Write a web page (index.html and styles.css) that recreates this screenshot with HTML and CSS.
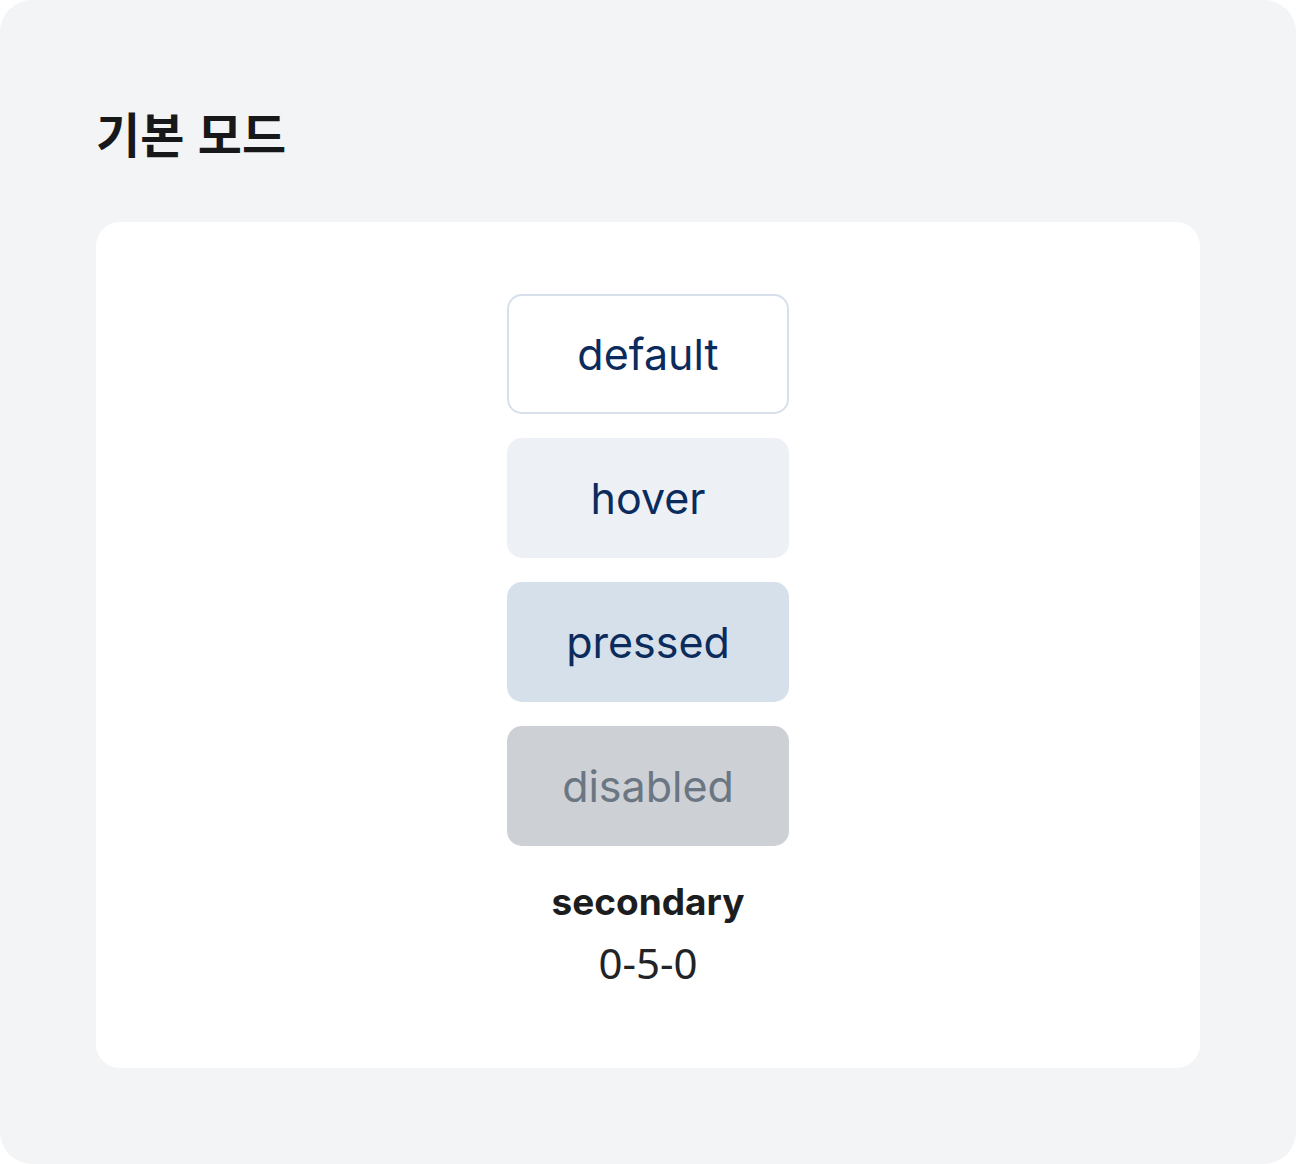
FILE: index.html
```html
<!DOCTYPE html>
<html lang="ko">
<head>
<meta charset="utf-8">
<link rel="stylesheet" href="styles.css">
</head>
<body>
<div class="frame">
  <h1 class="title">기본 모드</h1>
  <div class="card">
    <div class="stack">
      <div class="btn btn-default">default</div>
      <div class="btn btn-hover">hover</div>
      <div class="btn btn-pressed">pressed</div>
      <div class="btn btn-disabled">disabled</div>
    </div>
    <div class="caption">
      <div class="name">secondary</div>
      <div class="code">0-5-0</div>
    </div>
  </div>
</div>
</body>
</html>
```

FILE: styles.css
```css
* { box-sizing: border-box; }
html, body { margin: 0; padding: 0; background: #ffffff; }
body {
  font-family: Inter, "Noto Sans CJK KR", sans-serif;
  width: 1296px;
  height: 1164px;
}
.frame {
  width: 1296px;
  height: 1164px;
  background: #f3f4f6;
  border-radius: 32px;
  padding: 96px 96px 96px 96px;
  display: flex;
  flex-direction: column;
}
.title {
  margin: 0;
  font-family: "Noto Sans CJK KR", Inter, sans-serif;
  font-weight: 700;
  font-size: 48px;
  line-height: 72px;
  color: #17181a;
  height: 72px;
}
.card {
  margin-top: 54px;
  background: #ffffff;
  border-radius: 24px;
  height: 846px;
  padding-top: 72px;
  display: flex;
  flex-direction: column;
  align-items: center;
}
.stack {
  display: flex;
  flex-direction: column;
  gap: 24px;
}
.btn {
  width: 282px;
  height: 120px;
  border-radius: 15px;
  display: flex;
  align-items: center;
  justify-content: center;
  font-size: 43px;
  font-weight: 400;
  color: #0b2b5c;
}
.btn-default {
  background: #ffffff;
  border: 2px solid #d6dfea;
}
.btn-hover { background: #edf1f6; }
.btn-pressed { background: #d6e0ea; }
.btn-disabled { background: #cdd0d5; color: #6b7683; }
.caption {
  margin-top: 30px;
  display: flex;
  flex-direction: column;
  align-items: center;
  color: #1c1d1f;
}
.name {
  font-size: 37px;
  font-weight: 700;
  line-height: 52px;
}
.code {
  margin-top: 9px;
  font-family: "Noto Sans", Inter, sans-serif;
  font-size: 42px;
  font-weight: 400;
  line-height: 52px;
  color: #222326;
}
```
